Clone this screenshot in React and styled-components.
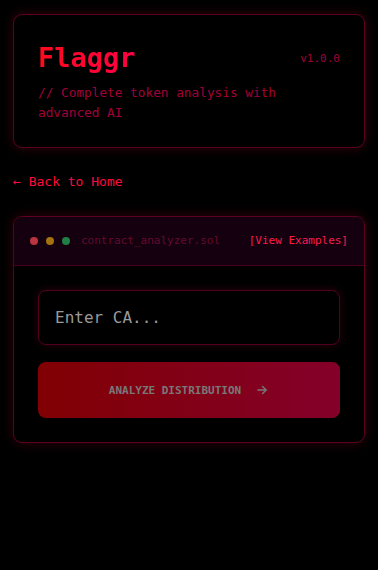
import React from "react";
import styled, { createGlobalStyle } from "styled-components";

const Global = createGlobalStyle`
  html, body { margin: 0; padding: 0; background: #000; }
  body { font-family: "DejaVu Sans Mono", "Liberation Mono", monospace; }
  * { box-sizing: border-box; }
`;

const Page = styled.div`
  min-height: 570px;
  background: #000;
  padding: 14px 13px;
  display: flex;
  flex-direction: column;
`;

const Card = styled.div`
  border: 1px solid #5c0022;
  border-radius: 9px;
  background: #000;
  box-shadow: 0 0 12px rgba(255, 0, 60, 0.2);
  overflow: hidden;
`;

const HeaderCard = styled(Card)`
  padding: 24px;
  height: 134px;
`;

const TitleRow = styled.div`
  display: flex;
  justify-content: space-between;
  align-items: center;
`;

const Title = styled.h1`
  margin: 0;
  font-size: 27px;
  font-weight: 700;
  line-height: 38px;
  background: linear-gradient(90deg, #ff0a1e 0%, #ff0044 100%);
  -webkit-background-clip: text;
  background-clip: text;
  color: transparent;
`;

const Version = styled.span`
  font-size: 11px;
  color: #a0003a;
`;

const Subtitle = styled.p`
  margin: 6px 0 0;
  font-size: 12.75px;
  line-height: 20px;
  color: #a3003b;
`;

const BackLink = styled.a`
  margin: 26px 0 0;
  font-size: 13px;
  line-height: 16px;
  color: #ff0a3c;
  text-decoration: none;
`;

const AnalyzerCard = styled(Card)`
  margin-top: 26px;
`;

const WindowBar = styled.div`
  height: 49px;
  background: #150010;
  border-bottom: 1px solid #4a001c;
  display: flex;
  align-items: center;
  padding: 0 16px;
`;

const Dots = styled.div`
  display: flex;
  gap: 8px;
`;

const Dot = styled.span`
  width: 8px;
  height: 8px;
  border-radius: 50%;
  background: ${(p) => p.$c};
`;

const FileName = styled.span`
  margin-left: 11px;
  font-size: 11px;
  line-height: 16px;
  color: #640b2e;
  flex: 1;
`;

const Examples = styled.button`
  background: none;
  border: none;
  padding: 0;
  font-family: inherit;
  font-size: 11px;
  line-height: 16px;
  color: #ff1a4a;
  cursor: pointer;
`;

const Body = styled.div`
  padding: 24px;
  display: flex;
  flex-direction: column;
  gap: 17px;
`;

const Input = styled.input`
  height: 55px;
  width: 100%;
  background: #000;
  border: 1px solid #520020;
  border-radius: 8px;
  padding: 0 16px;
  font-family: inherit;
  font-size: 16px;
  color: #ccc;
  outline: none;
  box-shadow: 0 0 8px rgba(255, 0, 60, 0.16);
  &::placeholder { color: #9a9a9a; }
`;

const AnalyzeButton = styled.button`
  height: 56px;
  width: 100%;
  border: none;
  border-radius: 8px;
  background: linear-gradient(90deg, #800003 0%, #85002a 100%);
  color: #787878;
  font-family: inherit;
  font-size: 11px;
  font-weight: 700;
  display: flex;
  align-items: center;
  justify-content: center;
  gap: 14px;
  cursor: not-allowed;
`;

export default function App() {
  return (
    <>
      <Global />
      <Page>
        <HeaderCard>
          <TitleRow>
            <Title>Flaggr</Title>
            <Version>v1.0.0</Version>
          </TitleRow>
          <Subtitle>// Complete token analysis with advanced AI</Subtitle>
        </HeaderCard>
        <BackLink href="#">← Back to Home</BackLink>
        <AnalyzerCard>
          <WindowBar>
            <Dots>
              <Dot $c="#b8343f" />
              <Dot $c="#a4720e" />
              <Dot $c="#1f7f44" />
            </Dots>
            <FileName>contract_analyzer.sol</FileName>
            <Examples>[View Examples]</Examples>
          </WindowBar>
          <Body>
            <Input placeholder="Enter CA..." />
            <AnalyzeButton disabled>
              ANALYZE DISTRIBUTION
              <svg width="14" height="14" viewBox="0 0 24 24" fill="none" stroke="#787878" strokeWidth="2.4" strokeLinecap="round" strokeLinejoin="round">
                <path d="M5 12h14" />
                <path d="M13 6l6 6-6 6" />
              </svg>
            </AnalyzeButton>
          </Body>
        </AnalyzerCard>
      </Page>
    </>
  );
}
